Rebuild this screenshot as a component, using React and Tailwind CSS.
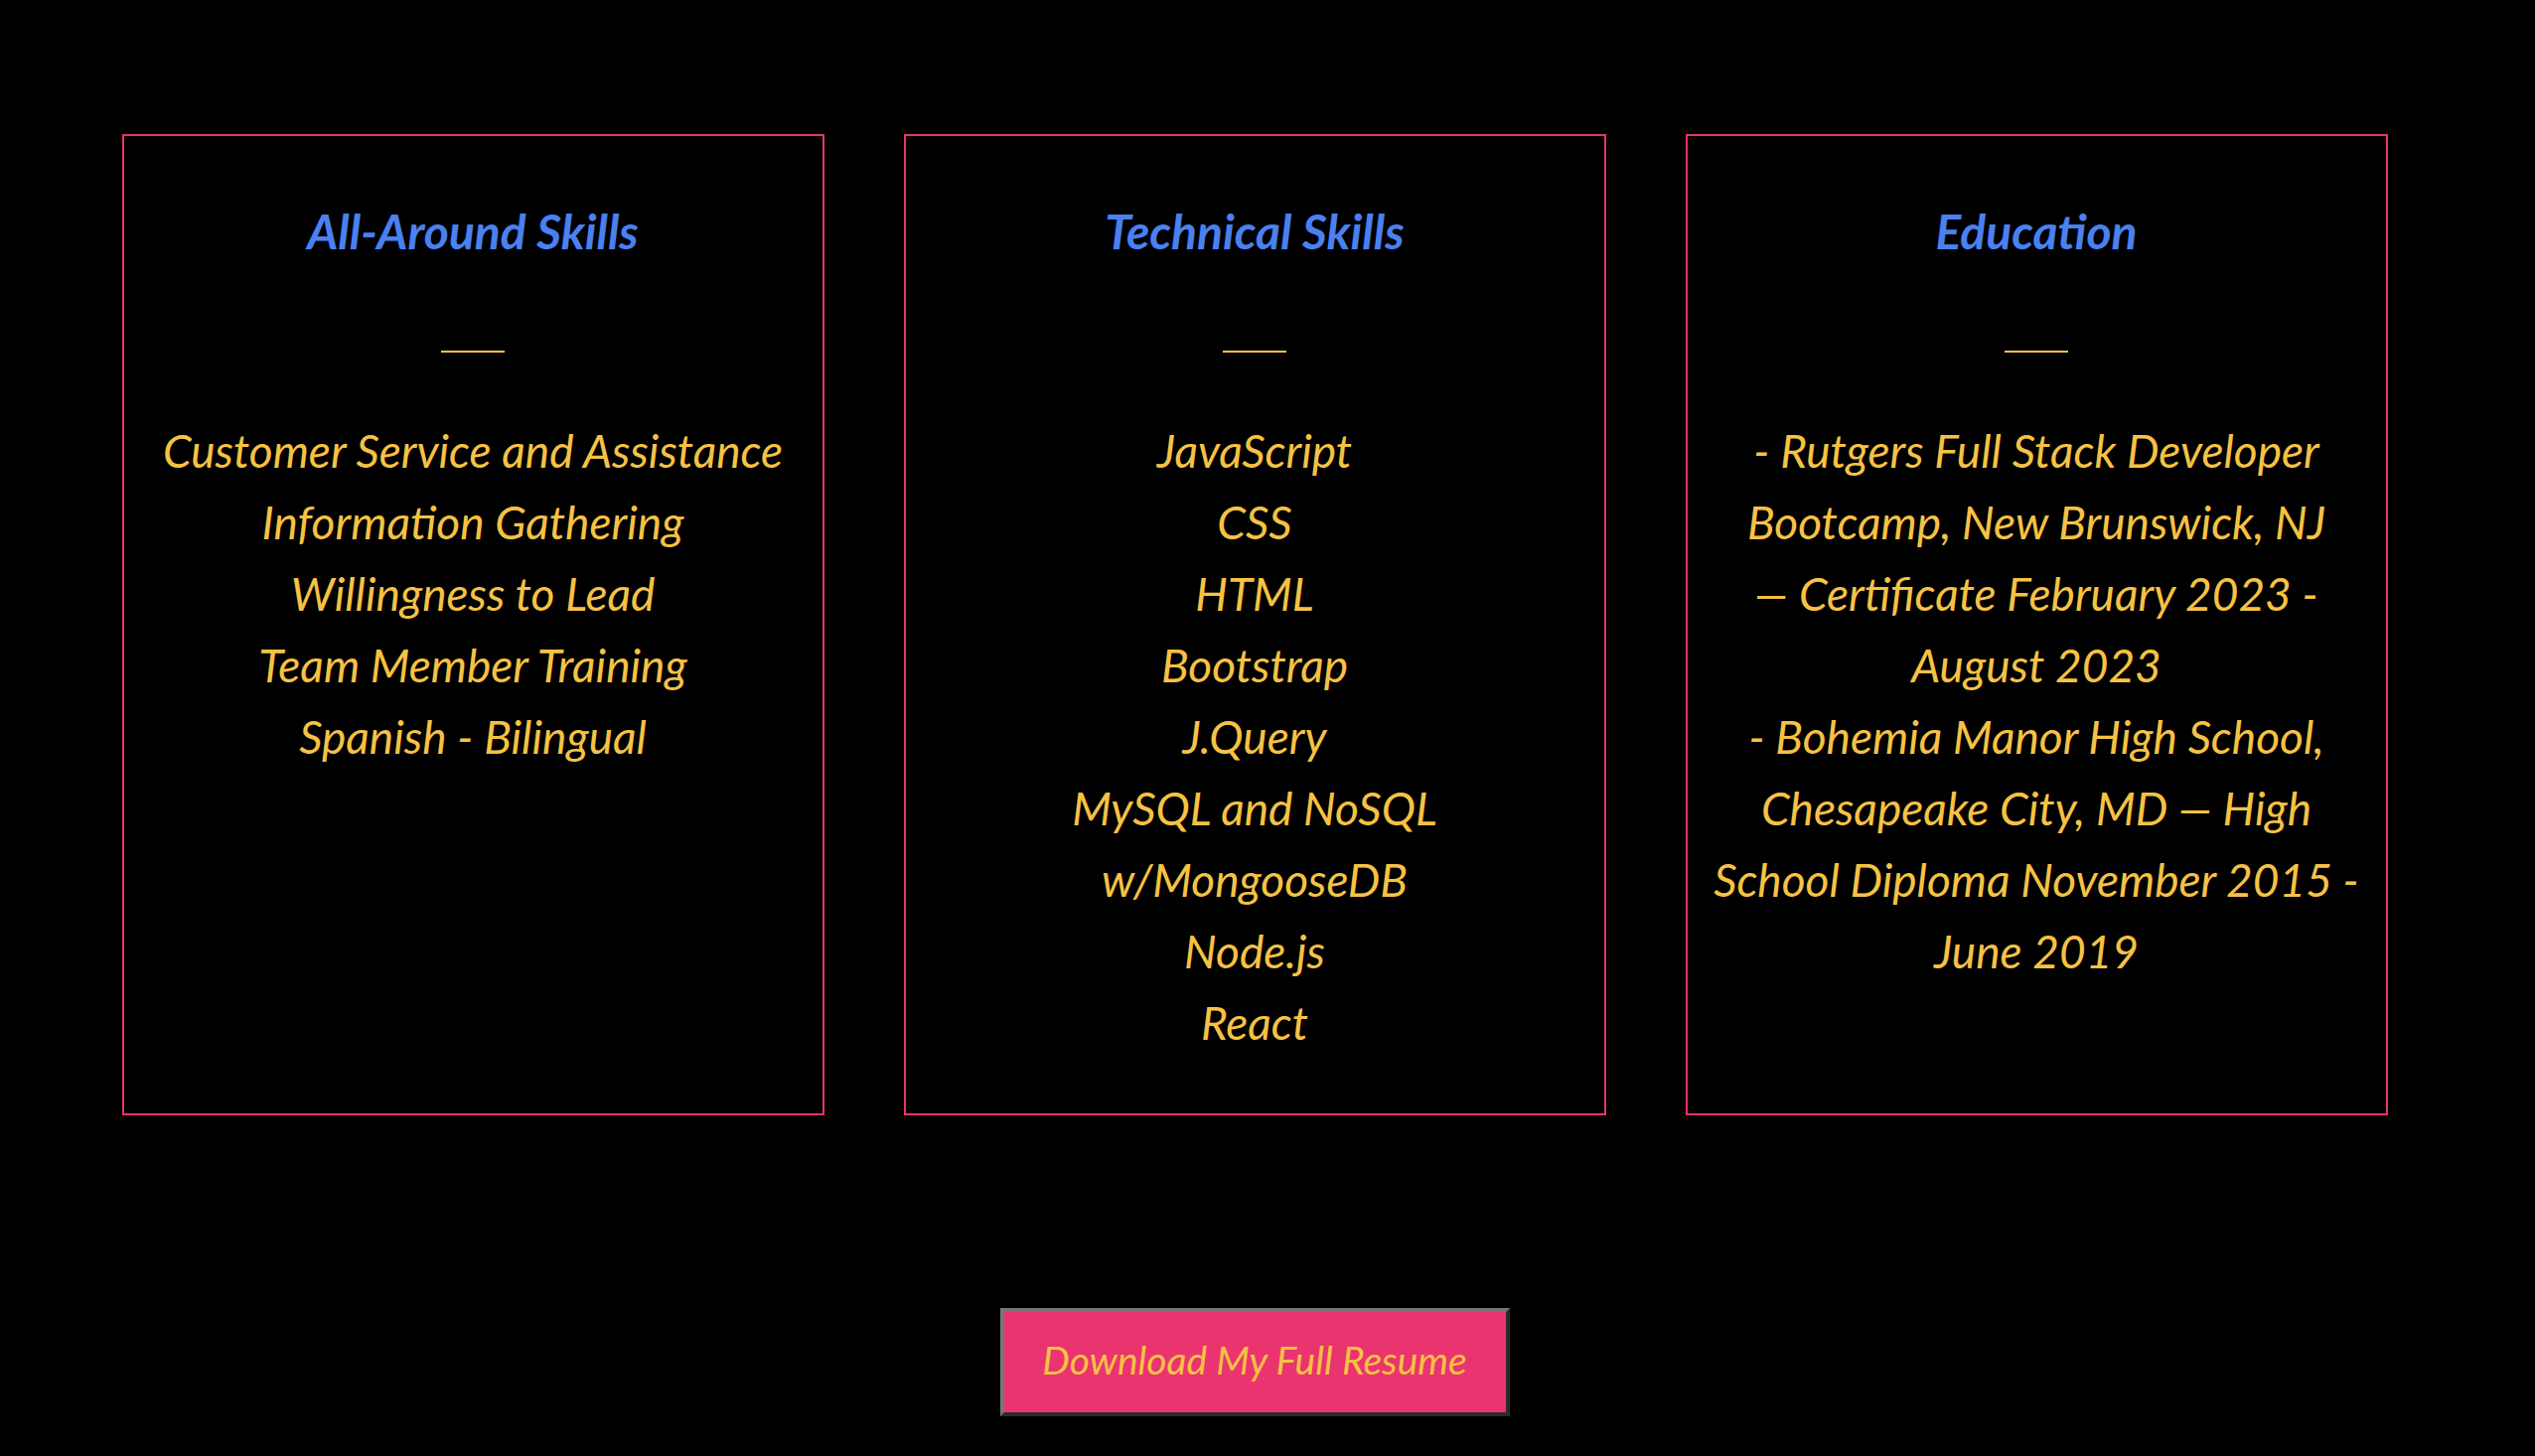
import React from "react";

const font = { fontFamily: "Lato, 'Open Sans', sans-serif" };

function Card({ title, lines }) {
  return (
    <div className="w-[707px] h-[988px] border-2 border-[#e8336d] flex flex-col items-center pt-[66px] shrink-0">
      <h3 className="text-[48px] leading-[60px] font-bold italic text-[#4a80f0] m-0">{title}</h3>
      <div className="w-[64px] h-[2px] bg-[#f6c244] mt-[90px]" />
      <div className="mt-[63px] flex flex-col items-center text-[46px] leading-[72px] italic text-[#f6c244]">
        {lines.map((l, i) => (
          <div key={i} className="whitespace-nowrap">{l}</div>
        ))}
      </div>
    </div>
  );
}

export default function App() {
  return (
    <div className="w-full h-[1466px] bg-black overflow-hidden" style={font}>
      <div className="w-[2526px] flex flex-col items-center pt-[135px]">
        <div className="flex gap-[80px]">
          <Card
            title="All-Around Skills"
            lines={[
              "Customer Service and Assistance",
              "Information Gathering",
              "Willingness to Lead",
              "Team Member Training",
              "Spanish - Bilingual",
            ]}
          />
          <Card
            title="Technical Skills"
            lines={[
              "JavaScript",
              "CSS",
              "HTML",
              "Bootstrap",
              "J.Query",
              "MySQL and NoSQL",
              "w/MongooseDB",
              "Node.js",
              "React",
            ]}
          />
          <Card
            title="Education"
            lines={[
              "- Rutgers Full Stack Developer",
              "Bootcamp, New Brunswick, NJ",
              "— Certificate February 2023 -",
              "August 2023",
              "- Bohemia Manor High School,",
              "Chesapeake City, MD — High",
              "School Diploma November 2015 -",
              "June 2019",
            ]}
          />
        </div>
        <button className="mt-[194px] w-[513px] h-[109px] bg-[#ea3470] border-4 border-t-[#767676] border-l-[#767676] border-b-[#2b2b2b] border-r-[#2b2b2b] text-[39px] italic text-[#f6c244] flex items-center justify-center pb-[4px]">
          Download My Full Resume
        </button>
      </div>
    </div>
  );
}
